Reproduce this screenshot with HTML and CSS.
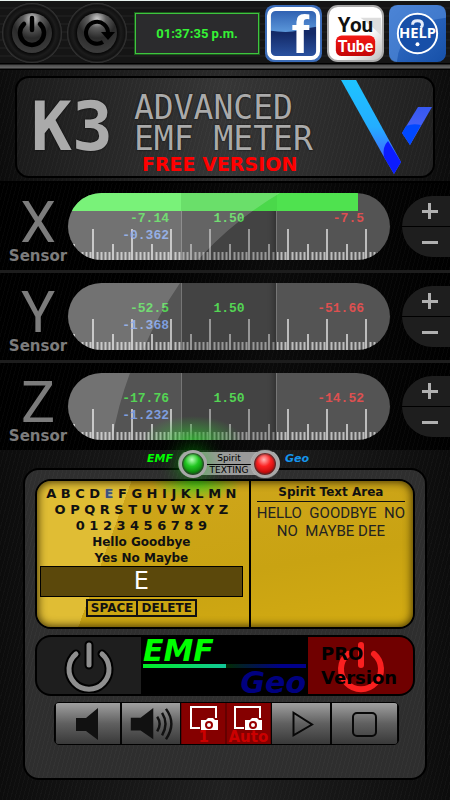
FILE: index.html
```html
<!DOCTYPE html>
<html lang="en">
<head>
<meta charset="utf-8">
<meta name="viewport" content="width=device-width, initial-scale=1">
<title>K3 Advanced EMF Meter</title>
<link rel="stylesheet" href="styles.css">
</head>
<body>
<svg class="defs" width="0" height="0" aria-hidden="true">
  <defs>
    <pattern id="ticks" x="24" y="0" width="39" height="67" patternUnits="userSpaceOnUse">
      <path d="M5.5 59v8M9.5 59v8M13.5 59v8M17.5 59v8M25.5 59v8M29.5 59v8M33.5 59v8M37.5 59v8" stroke="#bdbdbd" stroke-width="2"/>
      <path d="M21 51v16" stroke="#bdbdbd" stroke-width="2"/>
      <path d="M1 36v31" stroke="#bdbdbd" stroke-width="2"/>
    </pattern>
    <radialGradient id="knob" cx=".5" cy=".15" r=".8">
      <stop offset="0" stop-color="#d0d0d0"/><stop offset=".28" stop-color="#5c5c5c"/><stop offset=".6" stop-color="#2a2a2a"/><stop offset="1" stop-color="#3a3a3a"/>
    </radialGradient>
    <radialGradient id="ring">
      <stop offset=".66" stop-color="#050505"/><stop offset=".8" stop-color="#1c1c1c"/><stop offset=".93" stop-color="#111"/><stop offset="1" stop-color="#3c3c3c"/>
    </radialGradient>
    <linearGradient id="blueTop" x2="0" y2="1"><stop offset="0" stop-color="#2c5cae"/><stop offset="1" stop-color="#5b97da"/></linearGradient>
    <linearGradient id="blueLow" x2="0" y2="1"><stop offset="0" stop-color="#142a68"/><stop offset=".5" stop-color="#142a68"/><stop offset="1" stop-color="#2c55a4"/></linearGradient>
    <linearGradient id="helpBg" x2="1" y2="1"><stop offset="0" stop-color="#3b75cd"/><stop offset="1" stop-color="#1650a8"/></linearGradient>
    <linearGradient id="redBg" x2="0" y2="1"><stop offset="0" stop-color="#f51a16"/><stop offset="1" stop-color="#c30507"/></linearGradient>
    <linearGradient id="whiteBg" x2="1" y2="1"><stop offset="0" stop-color="#fff"/><stop offset=".6" stop-color="#fff"/><stop offset="1" stop-color="#bbb"/></linearGradient>
    <linearGradient id="logoLong" x2="0" y2="1"><stop offset="0" stop-color="#1ec4ff"/><stop offset=".5" stop-color="#24adff"/><stop offset=".8" stop-color="#3c70ff"/></linearGradient>
    <linearGradient id="logoShort" x2="0" y2="1"><stop offset="0" stop-color="#3658f0"/><stop offset="1" stop-color="#5367ff"/></linearGradient>
  </defs>
</svg>

<header class="topbar">
  <button class="knob" aria-label="Power">
    <svg viewBox="0 0 60 60"><circle cx="30" cy="30" r="30" fill="url(#ring)"/><circle cx="30" cy="30" r="20" fill="url(#knob)"/>
      <path d="M22 21a12 12 0 1 0 16 0M30 15v12" fill="none" stroke="#000" stroke-width="4.5" stroke-linecap="round"/></svg>
  </button>
  <button class="knob" aria-label="Reset">
    <svg viewBox="0 0 60 60"><circle cx="30" cy="30" r="30" fill="url(#ring)"/><circle cx="30" cy="30" r="20" fill="url(#knob)"/>
      <path d="M36 39A11 11 0 1 1 41 30" fill="none" stroke="#000" stroke-width="4"/><path d="M34 29h14l-7 8z" fill="#000"/></svg>
  </button>
  <time class="clock">01:37:35 p.m.</time>
  <a class="tile" href="#facebook" aria-label="Facebook">
    <svg viewBox="0 0 58 58"><rect width="58" height="58" rx="9" fill="#3b6cb8"/>
      <rect x="4" y="4" width="50" height="50" rx="7" fill="url(#blueLow)"/>
      <path d="M4 11q0-7 7-7h36q7 0 7 7v11q-9 1-20 4t-30 0z" fill="url(#blueTop)"/>
      <text x="27" y="49" class="face-f">f</text>
      <rect x="4" y="4" width="50" height="50" rx="7" fill="none" stroke="#fff" stroke-width="4"/></svg>
  </a>
  <a class="tile" href="#youtube" aria-label="YouTube">
    <svg viewBox="0 0 58 58"><rect x="1" y="1" width="56" height="56" rx="10" fill="url(#whiteBg)" stroke="#aaa" stroke-width="2"/>
      <path d="M34 13h21v18q-12-12-21-18" fill="#ddd"/>
      <rect x="9" y="31" width="40" height="21" rx="6" fill="url(#redBg)"/>
      <text x="29" y="27" class="yt yt-you">You</text><text x="29" y="48" class="yt yt-tube">Tube</text></svg>
  </a>
  <a class="tile" href="#help" aria-label="Help">
    <svg viewBox="0 0 58 58"><rect width="58" height="58" rx="9" fill="url(#helpBg)"/>
      <path d="M0 9q0-9 9-9h40q9 0 9 9v4Q12 18 8 58 0 58 0 49z" fill="#5b93e0" opacity=".5"/>
      <circle cx="29" cy="29" r="20" fill="#174fa8" stroke="#fff" stroke-width="2"/>
      <path d="M24 20q0-4 5-4t5 4q0 2-2 3" fill="none" stroke="#e4ecfa" stroke-width="3"/><circle cx="29" cy="40" r="2" fill="#fff"/>
      <text x="29" y="34" class="help-word">HELP</text></svg>
  </a>
</header>

<section class="brand">
  <div class="plate">
    <span class="model">K3</span>
    <div class="names">
      <h1 class="name">ADVANCED<br>EMF METER</h1>
      <p class="edition">FREE VERSION</p>
    </div>
    <svg class="logo" viewBox="0 0 91 94" aria-hidden="true">
      <path d="M0 0h15l45 82-7 12L43 77z" fill="url(#logoLong)"/>
      <path d="M47 61q-6 6-4 16l10 17 7-12z" fill="#0c1cff"/>
      <path d="M77 27h14L69 65l-8-12z" fill="url(#logoShort)"/>
      <path d="M65 46q7-3 15-1L69 65l-8-12z" fill="#0048ff"/>
    </svg>
  </div>
</section>

<main>
  <section class="sensor">
    <h2 class="axis"><span class="letter">X</span><span class="word">Sensor</span></h2>
    <div class="gauge">
      <svg class="scale" aria-hidden="true"><rect width="100%" height="67" fill="url(#ticks)"/></svg>
      <div class="cell low"><span class="green">-7.14</span><span class="blue">-0.362</span></div>
      <div class="cell mid"><span class="green">1.50</span></div>
      <div class="cell high"><span class="red">-7.5</span></div>
      <div class="level"></div>
      <svg class="gloss" viewBox="0 0 322 67" preserveAspectRatio="none" aria-hidden="true"><path d="M0 0h212Q165 28 130 67H0z"/></svg>
    </div>
    <div class="stepper"><button class="step" aria-label="Increase X"><i class="plus"></i></button><button class="step" aria-label="Decrease X"><i class="minus"></i></button></div>
  </section>
  <section class="sensor">
    <h2 class="axis"><span class="letter">Y</span><span class="word">Sensor</span></h2>
    <div class="gauge">
      <svg class="scale" aria-hidden="true"><rect width="100%" height="67" fill="url(#ticks)"/></svg>
      <div class="cell low"><span class="green">-52.5</span><span class="blue">-1.368</span></div>
      <div class="cell mid"><span class="green">1.50</span></div>
      <div class="cell high"><span class="red">-51.66</span></div>
      <svg class="gloss" viewBox="0 0 322 67" preserveAspectRatio="none" aria-hidden="true"><path d="M0 0h112Q90 32 75 67H0z"/></svg>
    </div>
    <div class="stepper"><button class="step" aria-label="Increase Y"><i class="plus"></i></button><button class="step" aria-label="Decrease Y"><i class="minus"></i></button></div>
  </section>
  <section class="sensor">
    <h2 class="axis"><span class="letter">Z</span><span class="word">Sensor</span></h2>
    <div class="gauge lit">
      <svg class="scale" aria-hidden="true"><rect width="100%" height="67" fill="url(#ticks)"/></svg>
      <div class="cell low"><span class="green">-17.76</span><span class="blue">-1.232</span></div>
      <div class="cell mid"><span class="green">1.50</span></div>
      <div class="cell high"><span class="red">-14.52</span></div>
      <svg class="gloss" viewBox="0 0 322 67" preserveAspectRatio="none" aria-hidden="true"><path d="M0 0h62Q50 32 44 67H0z"/></svg>
    </div>
    <div class="stepper"><button class="step" aria-label="Increase Z"><i class="plus"></i></button><button class="step" aria-label="Decrease Z"><i class="minus"></i></button></div>
  </section>

  <section class="console">
    <div class="mode">
      <span class="mode-name emf">EMF</span>
      <div class="switch">
        <button class="lamp on" aria-label="EMF spirit texting"></button>
        <span class="switch-text"><span class="spirit">Spirit</span><span class="texting">TEXTING</span></span>
        <button class="lamp off" aria-label="Geo spirit texting"></button>
      </div>
      <span class="mode-name geo">Geo</span>
    </div>
    <div class="panel">
      <div class="board">
        <div class="letters">
          <p class="row">A B C D <span class="picked">E</span> F G H I J K L M N</p>
          <p class="row">O P Q R S T U V W X Y Z</p>
          <p class="row">0 1 2 3 4 5 6 7 8 9</p>
          <p class="row words">Hello Goodbye</p>
          <p class="row words">Yes No Maybe</p>
          <output class="current">E</output>
          <div class="edit"><button>SPACE</button><button>DELETE</button></div>
        </div>
        <div class="spirit-area">
          <h3>Spirit Text Area</h3>
          <p class="message">HELLO  GOODBYE  NO
NO  MAYBE DEE</p>
        </div>
      </div>

      <div class="power">
        <button class="power-btn" aria-label="EMF power">
          <svg viewBox="0 0 54 54"><g fill="none" stroke-linecap="round"><path d="M14 15a20 20 0 1 0 26 0M27 6v20" stroke="#000" stroke-width="9"/><path d="M14 15a20 20 0 1 0 26 0M27 6v20" stroke="#8e8e8e" stroke-width="5"/></g></svg>
        </button>
        <div class="screen">
          <span class="screen-emf">EMF</span>
          <div class="beam"></div>
          <span class="screen-geo">Geo</span>
        </div>
        <button class="power-btn pro">
          <svg viewBox="0 0 54 54" aria-hidden="true"><path d="M14 15a20 20 0 1 0 26 0M27 6v20" fill="none" stroke="#fa2020" stroke-width="6" stroke-linecap="round"/></svg>
          <span>PRO<br>Version</span>
        </button>
      </div>

      <div class="tools">
        <button class="tool" aria-label="Mute"><svg viewBox="0 0 60 40"><path d="M18 14h10L40 4v32L28 27H18z" fill="#111"/></svg></button>
        <button class="tool" aria-label="Volume"><svg viewBox="0 0 60 40"><path d="M9 14h10L32 4v32L19 27H9z" fill="#111"/><path d="M36 13q5 7 0 15M41 9q7 11 0 23M45 5q11 15 0 31" fill="none" stroke="#111" stroke-width="2.500"/></svg></button>
        <button class="tool shot"><svg viewBox="0 0 28 24" aria-hidden="true"><path d="M10 22H1V1h25v11" fill="none" stroke="#fff" stroke-width="2"/><path d="M11 14h5l2-2h5l2 2h3v10H11z" fill="#fff"/><circle cx="19" cy="19" r="3" fill="#fff" stroke="#900" stroke-width="2"/></svg><span>1</span></button>
        <button class="tool shot"><svg viewBox="0 0 28 24" aria-hidden="true"><path d="M10 22H1V1h25v11" fill="none" stroke="#fff" stroke-width="2"/><path d="M11 14h5l2-2h5l2 2h3v10H11z" fill="#fff"/><circle cx="19" cy="19" r="3" fill="#fff" stroke="#900" stroke-width="2"/></svg><span>Auto</span></button>
        <button class="tool" aria-label="Play"><svg viewBox="0 0 60 40"><path d="M22 9v23l19-11z" fill="none" stroke="#080808" stroke-width="2"/></svg></button>
        <button class="tool" aria-label="Stop"><svg viewBox="0 0 60 40"><rect x="18" y="9" width="23" height="23" rx="4" fill="none" stroke="#080808" stroke-width="2"/></svg></button>
      </div>
    </div>
  </section>
</main>
</body>
</html>
```

FILE: styles.css
```css
* { box-sizing: border-box; }

:root {
  --weave: repeating-linear-gradient(105deg, rgba(255, 255, 255, .025) 0 1px, transparent 1px 4px);
  --wide: "DejaVu Sans", Verdana, sans-serif;
}

body {
  margin: 0;
  background: #131313;
  color: #000;
  font-family: var(--wide);
}

h1, h2, h3, p { margin: 0; }

button {
  margin: 0;
  padding: 0;
  border: 0;
  background: none;
  font: inherit;
  color: inherit;
}

svg { display: block; }
.defs { position: absolute; }

/* Top bar */
.topbar {
  display: flex;
  align-items: center;
  gap: 5px;
  height: 70px;
  padding: 3px 4px 8px 2px;
  border-top: 1px solid #e8f2ee;
  background:
    linear-gradient(transparent 62px, #000 62px 63px, #4a4a4a 64px, #666 67px, #000 68px),
    repeating-linear-gradient(#151515 0 6px, #1c1c1c 6px 8px);
}
.knob { width: 60px; flex: none; }
.clock {
  flex: 1;
  margin: 0 1px 0 3px;
  height: 41px;
  border: 1px solid #3fc43f;
  outline: 1px solid #1c5c1c;
  background: #2b2b2d;
  color: #35f335;
  font: bold 13px/39px Roboto, sans-serif;
  text-align: center;
  white-space: nowrap;
}
.tile { width: 57px; flex: none; }
.face-f { font: bold 54px "Liberation Sans", sans-serif; fill: #fff; }
.yt { font-family: Roboto, sans-serif; font-weight: bold; text-anchor: middle; }
.yt-you { font-size: 21px; fill: #111; }
.yt-tube { font-size: 16px; fill: #fff; }
.help-word { font: bold 15px "Open Sans", sans-serif; fill: #fff; text-anchor: middle; }

/* Brand plate */
.brand {
  padding: 6px 15px 3px;
  border-bottom: 2px solid #000;
  background: var(--weave), linear-gradient(90deg, #0c0c0c, #2a2a2a 50%, #0c0c0c);
}
.plate {
  display: flex;
  align-items: center;
  height: 102px;
  padding: 0 1px 0 14px;
  border: 2px solid #000;
  border-radius: 14px;
  background: var(--weave), linear-gradient(90deg, #1b1b1b, #363636 50%, #202020);
}
.model {
  width: 87px;
  color: #aaa;
  font: bold 68px/80px "DejaVu Sans Mono", monospace;
  text-shadow: 0 0 2px #000;
}
.names { flex: 1; margin-left: 16px; padding-top: 12px; }
.name {
  color: #aaa;
  font: 33px/31px "DejaVu Sans Mono", monospace;
  text-shadow: 0 0 2px #000;
  white-space: nowrap;
}
.edition {
  padding-left: 8px;
  color: #f00;
  font-size: 19px;
  font-weight: bold;
  line-height: 20px;
  white-space: nowrap;
}
.logo { width: 91px; flex: none; }

/* Sensor rows */
.sensor {
  display: grid;
  grid-template-columns: 68px 1fr 48px;
  align-items: start;
  padding: 10px 0 7px;
  border-bottom: 3px solid #1d1d1d;
  background: var(--weave), linear-gradient(90deg, #000 30%, #0b0b0b 60%, #000);
}
.sensor:nth-of-type(3) { border-bottom: 0; }
.axis {
  display: flex;
  flex-direction: column;
  align-items: center;
  padding: 4px 0 0 8px;
  color: #7c7c7c;
}
.letter { font: 57px/52px Roboto, sans-serif; }
.word { font-size: 15px; line-height: 14px; }
.gauge {
  position: relative;
  display: grid;
  grid-template-columns: 113fr 96fr 113fr;
  height: 67px;
  margin-right: 12px;
  overflow: hidden;
  border-radius: 34px;
  background: #545454;
  font: bold 13px/17px "Liberation Mono", monospace;
}
.level {
  position: absolute;
  inset: 0 auto auto 0;
  width: 90%;
  height: 18px;
  background: linear-gradient(90deg, #5cf05c 39%, #4ad84a 39% 72%, #4fe24f 72%);
}
.scale { position: absolute; inset: 0; width: 100%; height: 67px; }
.gloss { position: absolute; inset: 0; width: 100%; height: 67px; fill: rgba(255, 255, 255, .18); }
.cell {
  position: relative;
  display: flex;
  flex-direction: column;
  align-items: flex-end;
  padding-top: 17px;
}
.low { padding-right: 12px; }
.mid {
  align-items: center;
  border: solid #767676;
  border-width: 0 1px;
  background: rgba(0, 0, 0, .2);
  box-shadow: inset -8px 0 6px -6px rgba(0, 0, 0, .3);
}
.high { padding-right: 26px; }
.lit::after {
  content: "";
  position: absolute;
  inset: 30px 44% 0 24%;
  background: radial-gradient(50px 24px at 46% 100%, rgba(50, 190, 50, .75), transparent);
}
.green { color: #54d454; }
.blue { color: #7f9ede; }
.red { color: #dd5050; }
.stepper {
  display: grid;
  gap: 1px;
  margin-top: 3px;
  overflow: hidden;
  border-radius: 31px 0 0 31px;
  background: #000;
}
.step {
  display: grid;
  place-items: center;
  height: 30px;
  padding-left: 7px;
  background: #1e1e1e;
}
.plus, .minus {
  width: 16px;
  height: 16px;
  background: linear-gradient(#b0b0b0, #b0b0b0) center / 16px 3px no-repeat;
}
.plus {
  background:
    linear-gradient(#b0b0b0, #b0b0b0) center / 16px 3px no-repeat,
    linear-gradient(#b0b0b0, #b0b0b0) center / 3px 16px no-repeat;
}

/* Console */
.console {
  padding: 0 23px 20px;
  background: var(--weave), linear-gradient(90deg, #0c0c0c, #202020 50%, #0c0c0c);
}
.mode {
  position: relative;
  z-index: 1;
  display: grid;
  grid-template-columns: 1fr 102px 1fr;
  gap: 5px;
  align-items: start;
  height: 18px;
  padding-left: 8px;
}
.mode-name { font: italic bold 11px/18px var(--wide); }
.emf { color: #0f0; text-align: right; }
.geo { color: #1595ed; }
.switch {
  display: grid;
  grid-template-columns: 28px 1fr 28px;
  align-items: center;
  height: 27px;
  padding: 0 1px;
  border-radius: 14px;
  background: linear-gradient(transparent 2px, #9a9a9a 2px 25px, transparent 25px);
}
.lamp {
  width: 28px;
  height: 28px;
  border: 3px solid #a8a8a8;
  border-radius: 50%;
  box-shadow: inset 0 0 2px 1px #333, 0 0 1px #fff;
}
.on {
  background: radial-gradient(circle at 45% 30%, #baffba, #22c722 35%, #067506 75%, #20b520);
  box-shadow: inset 0 0 2px 1px #333, 0 0 18px 3px rgba(0, 200, 0, .45);
}
.off { background: radial-gradient(circle at 45% 30%, #ffb4b4, #fc2222 35%, #b80505 75%, #f33); }
.switch-text { display: grid; justify-items: center; line-height: 11px; }
.spirit { justify-self: stretch; border-bottom: 1px solid #000; font-size: 9px; text-align: center; }
.texting { font-size: 9px; }
.panel {
  display: grid;
  gap: 6px;
  padding: 9px 10px 33px;
  border: 2px solid #000;
  border-radius: 16px;
  background: var(--weave), #2e2e2e;
}
.board {
  display: grid;
  grid-template-columns: 215fr 163fr;
  height: 150px;
  overflow: hidden;
  border: 2px solid #000;
  border-radius: 16px;
  background:
    radial-gradient(46px 20px at 160px 0, rgba(60, 210, 30, .9), transparent),
    linear-gradient(110deg, #e0bd34 0 22%, transparent 22%),
    linear-gradient(170deg, #d0a61d, #c9a312 60%, #d3ab12);
  box-shadow: inset 0 0 9px 1px rgba(50, 38, 0, .9);
}
.letters {
  padding: 5px 6px 0 3px;
  border-right: 2px solid #000;
  color: #111;
  text-align: center;
}
.row { font-size: 13px; font-weight: bold; line-height: 16px; white-space: nowrap; }
.words { font-size: 12px; }
.picked { color: #3d527e; background: radial-gradient(closest-side, #9ca3a8, transparent); }
.current {
  display: block;
  height: 31px;
  margin: 0 0 2px;
  border: 1px solid #000;
  background: #5b480b;
  color: #fff;
  font-size: 24px;
  line-height: 29px;
}
.edit { display: flex; justify-content: center; }
.edit button {
  height: 18px;
  padding: 0 3px;
  border: 2px solid #111;
  font-size: 12px;
  font-weight: bold;
  line-height: 14px;
}
.edit button + button { border-left: 0; }
.spirit-area { padding: 2px 8px 0 6px; color: #111; text-align: center; }
.spirit-area h3 { border-bottom: 1px solid #111; font-size: 12px; line-height: 18px; }
.message {
  padding-top: 2px;
  color: #222;
  font: 15px/18px Roboto, sans-serif;
  white-space: pre;
}

.power {
  display: grid;
  grid-template-columns: 104fr 167fr 105fr;
  grid-template-rows: 57px;
  border: 2px solid #000;
  border-radius: 16px;
  background: #000;
}
.power-btn { display: grid; place-items: center; border-radius: 14px 0 0 14px; background: #1e1e1e; }
.power-btn svg { width: 54px; height: 54px; }
.screen {
  display: flex;
  flex-direction: column;
  padding: 0 2px;
  font-style: italic;
  font-weight: bold;
  font-size: 30px;
}
.screen-emf { color: #0f0; line-height: 27px; }
.beam {
  flex: none;
  height: 4px;
  background: linear-gradient(90deg, #0e2 0, #12c79a 51%, #032c03 51%, #00008a 85%);
}
.screen-geo { align-self: flex-end; color: #000080; line-height: 30px; }
.pro { border-radius: 0 14px 14px 0; background: #700000; }
.pro svg, .pro span { grid-area: 1 / 1; }
.pro span {
  position: relative;
  justify-self: start;
  padding-left: 13px;
  font-size: 18px;
  font-weight: bold;
  line-height: 24px;
  text-align: left;
}

.tools {
  display: grid;
  grid-template-columns: 66fr 61fr 45fr 45fr 61fr 67fr;
  height: 43px;
  margin: 0 16px 0 19px;
  overflow: hidden;
  border: 1px solid #000;
  border-radius: 5px;
}
.tool {
  display: grid;
  place-items: center;
  border: solid #050505;
  border-width: 0 1px;
  background: linear-gradient(#a0a0a0, #606060 50%, #393939);
}
.tool svg { width: 60px; max-width: 100%; }
.shot {
  align-content: start;
  padding-top: 3px;
  border-color: #650000;
  background: #850000;
  color: #cb0000;
  font-size: 15px;
  font-weight: bold;
  line-height: 14px;
}
.shot svg { width: 28px; height: 24px; }
```
